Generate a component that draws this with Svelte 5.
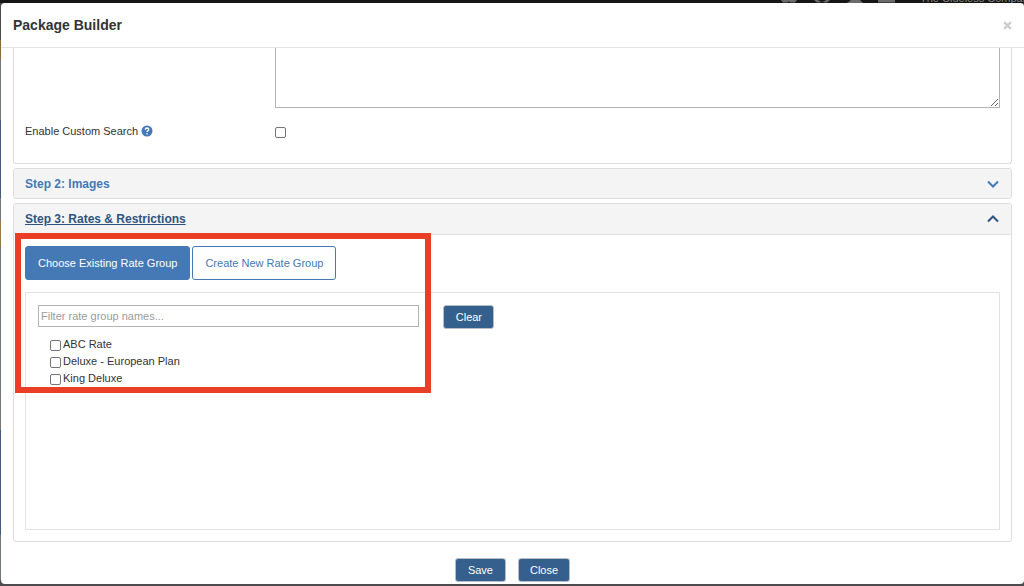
<script lang="ts">
  interface RateGroup {
    id: number;
    name: string;
  }

  const rateGroups: RateGroup[] = [
    { id: 1, name: 'ABC Rate' },
    { id: 2, name: 'Deluxe - European Plan' },
    { id: 3, name: 'King Deluxe' },
  ];

  let description = $state('');
  let customSearch = $state(false);
  let filter = $state('');
  let selected = $state<number[]>([]);
  let mode = $state<'existing' | 'new'>('existing');

  const visibleGroups = $derived(
    rateGroups.filter((g) => g.name.toLowerCase().includes(filter.toLowerCase())),
  );

  function clearFilter() {
    filter = '';
    selected = [];
  }
</script>

<div class="page">
  <div class="navbar">
    <svg class="nav-icons" viewBox="0 0 120 3" aria-hidden="true">
      <path d="M1 0h16l-2 2.500h-4L9 1.500 7 2.500H3z M34 0h4l2 1.500h4L46 0h4l-3 2.500h-3l-2-1-2 1h-3z M71 0h9l3 3H67z M98 0h17v2.500H98z" />
    </svg>
    <span class="nav-company">The Clueless Company</span>
  </div>

  <div class="modal" role="dialog" aria-labelledby="modal-title">
    <header class="modal-header">
      <h4 id="modal-title">Package Builder</h4>
      <button class="dismiss" type="button" aria-label="Dismiss">
        <svg viewBox="0 0 8 8"><path d="M1 1l6 6M7 1L1 7" /></svg>
      </button>
    </header>

    <div class="modal-body">
      <section class="panel panel-open-top">
        <div class="row">
          <div class="col-label"></div>
          <div class="col-control">
            <textarea aria-label="Description" bind:value={description}></textarea>
          </div>
        </div>
        <div class="row search-row">
          <div class="col-label">
            <label for="custom-search">Enable Custom Search</label>
            <svg class="help" viewBox="0 0 12 12" aria-hidden="true">
              <circle cx="6" cy="6" r="5.500" />
              <path d="M4.300 4.700C4.300 2.500 7.700 2.600 7.700 4.600C7.700 5.800 6 5.700 6 7.100M6 8.200V9.500" />
            </svg>
          </div>
          <div class="col-control">
            <input id="custom-search" type="checkbox" bind:checked={customSearch} />
          </div>
        </div>
      </section>

      <section class="panel">
        <h5 class="panel-heading closed">
          <a href="#images">Step 2: Images</a>
          <svg class="chevron" viewBox="0 0 12 8" aria-hidden="true"><path d="M1 1.500l5 5 5-5" /></svg>
        </h5>
      </section>

      <section class="panel">
        <h5 class="panel-heading open">
          <a href="#rates">Step 3: Rates &amp; Restrictions</a>
          <svg class="chevron" viewBox="0 0 12 8" aria-hidden="true"><path d="M1 6.500l5-5 5 5" /></svg>
        </h5>
        <div class="panel-body">
          <div class="tabs">
            <button
              type="button"
              class="tab"
              class:active={mode === 'existing'}
              onclick={() => (mode = 'existing')}
            >
              Choose Existing Rate Group
            </button>
            <button
              type="button"
              class="tab"
              class:active={mode === 'new'}
              onclick={() => (mode = 'new')}
            >
              Create New Rate Group
            </button>
          </div>

          <div class="rate-box">
            <div class="col-filter">
              <input
                class="filter"
                type="text"
                placeholder="Filter rate group names..."
                aria-label="Filter rate group names"
                bind:value={filter}
              />
              <ul>
                {#each visibleGroups as g (g.id)}
                  <li>
                    <label>
                      <input type="checkbox" value={g.id} bind:group={selected} />
                      {g.name}
                    </label>
                  </li>
                {/each}
              </ul>
            </div>
            <div class="col-clear">
              <button type="button" class="btn" onclick={clearFilter}>Clear</button>
            </div>
          </div>
        </div>
        <div class="highlight"></div>
      </section>
    </div>

    <footer class="modal-footer">
      <button type="button" class="btn">Save</button>
      <button type="button" class="btn">Close</button>
    </footer>
  </div>
</div>

<style>
  :global(body) {
    background: #4d4b4d;
  }

  .page {
    box-sizing: border-box;
    min-height: 100vh;
    padding: 0 0 2px 1px;
    background: linear-gradient(
      #4a4a4c 0 40px,
      #8a6a38 40px 60px,
      #77787c 60px 120px,
      #405a7c 120px 198px,
      #77787c 198px 220px,
      #9a7a48 220px 246px,
      #77787c 246px 430px,
      #405a7c 430px 535px,
      #77787c 535px 580px,
      #4d4b4d 580px
    );
    font-family: 'Liberation Sans', Arial, sans-serif;
    font-size: 11px;
    line-height: 16px;
    color: #333;
  }

  /* --- Navbar behind the dialog --- */

  .navbar {
    display: flex;
    align-items: flex-end;
    justify-content: flex-end;
    gap: 20px;
    height: 3px;
    margin-left: -1px;
    overflow: hidden;
    background: #171617;
  }

  .nav-icons {
    width: 120px;
    height: 3px;
    fill: #6b6b6b;
  }

  .nav-company {
    width: 104px;
    line-height: 9px;
    white-space: nowrap;
    color: #858585;
  }

  /* --- Dialog --- */

  .modal {
    background: #fff;
    border-radius: 4px;
  }

  .modal-header {
    display: flex;
    align-items: center;
    justify-content: space-between;
    height: 44px;
    padding: 0 12px;
    border-bottom: 1px solid #e5e5e5;
  }

  h4,
  h5 {
    margin: 0;
  }

  h4 {
    font-size: 14px;
  }

  .dismiss {
    display: flex;
    padding: 0;
    border: 0;
    background: none;
    cursor: pointer;
  }

  .dismiss svg {
    width: 9px;
    height: 9px;
    stroke: #ccc;
    stroke-width: 2;
  }

  .modal-body {
    display: flex;
    flex-direction: column;
    gap: 4px;
    padding: 0 12px;
  }

  .panel {
    position: relative;
    border: 1px solid #ddd;
    border-radius: 3px;
  }

  .panel-open-top {
    border-top: 0;
    border-top-left-radius: 0;
    border-top-right-radius: 0;
    padding-bottom: 24px;
  }

  .row {
    display: flex;
  }

  .col-label,
  .col-control {
    display: flex;
    align-items: center;
    box-sizing: border-box;
  }

  .col-label {
    gap: 3px;
    width: 25%;
    padding: 0 11px;
  }

  .col-control {
    width: 75%;
    padding: 0 11px 0 12px;
  }

  .search-row {
    margin-top: 15px;
  }

  textarea {
    box-sizing: border-box;
    width: 100%;
    height: 60px;
    border: 1px solid #b4b4b4;
    border-top: 0;
    resize: vertical;
    font: inherit;
  }

  .help {
    width: 12px;
    height: 12px;
    fill: #4479b5;
  }

  .help path {
    fill: none;
    stroke: #fff;
    stroke-width: 1.5;
  }

  input[type='checkbox'] {
    appearance: none;
    box-sizing: border-box;
    width: 11px;
    height: 11px;
    margin: 2px 0 0;
    border: 1px solid #767676;
    border-radius: 2px;
    background: #fff;
  }

  input[type='checkbox']:checked {
    background: #4479b5;
  }

  .panel-heading {
    display: flex;
    align-items: center;
    justify-content: space-between;
    height: 30px;
    padding: 0 12px 0 11px;
    border-radius: 2px;
    background: #f4f4f4;
    font-size: 12px;
    color: #4479b5;
  }

  .panel-heading.closed {
    height: 29px;
  }

  .panel-heading.open {
    border-bottom: 1px solid #ddd;
    color: #2d5482;
  }

  .panel-heading a {
    color: inherit;
    text-decoration: none;
  }

  .panel-heading.open a {
    text-decoration: underline;
  }

  .chevron {
    width: 12px;
    height: 8px;
    fill: none;
    stroke: currentColor;
    stroke-width: 2;
  }

  .panel-body {
    padding: 11px;
  }

  .tabs {
    display: flex;
    gap: 2px;
    margin-bottom: 12px;
  }

  .tab {
    padding: 8px 12px;
    border: 1px solid #4479b5;
    border-radius: 3px;
    background: #fff;
    color: #4479b5;
    font: inherit;
    cursor: pointer;
  }

  .tab.active {
    background: #4479b5;
    color: #fff;
  }

  .rate-box {
    display: flex;
    box-sizing: border-box;
    min-height: 238px;
    border: 1px solid #e2e2e2;
  }

  .col-filter {
    box-sizing: border-box;
    width: 41.6667%;
    padding: 12px;
  }

  .col-clear {
    padding: 12px;
  }

  .filter {
    box-sizing: border-box;
    width: 100%;
    height: 22px;
    padding: 0 2px;
    border: 1px solid #b4b4b4;
    font: inherit;
  }

  .filter::placeholder {
    color: #9b9b9b;
  }

  ul {
    margin: 9px 0 0;
    padding: 0 12px;
    list-style: none;
  }

  li label {
    display: flex;
    align-items: center;
    gap: 2px;
    line-height: 17px;
  }

  .btn {
    min-width: 51px;
    height: 24px;
    padding: 0 11px;
    border: 1px solid #b9bec4;
    border-radius: 3px;
    background: #355f8d;
    color: #fff;
    font: inherit;
    cursor: pointer;
  }

  /* Callout drawn over the rate group picker */
  .highlight {
    position: absolute;
    top: 29px;
    left: 1px;
    box-sizing: border-box;
    width: calc(41.6667% + 1px);
    height: 160px;
    border: 6px solid #ea3e26;
    pointer-events: none;
  }

  .modal-footer {
    display: flex;
    justify-content: center;
    gap: 12px;
    padding: 16px 12px 2px;
  }
</style>
